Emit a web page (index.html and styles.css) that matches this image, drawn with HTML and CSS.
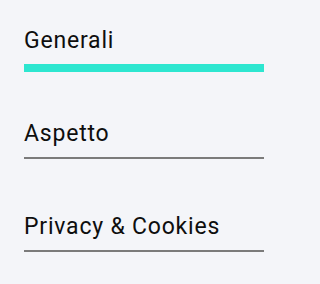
FILE: index.html
```html
<!DOCTYPE html>
<html lang="it">
<head>
<meta charset="utf-8">
<title>Impostazioni</title>
<link rel="stylesheet" href="styles.css">
</head>
<body>
<nav class="tabs">
  <a class="tab tab-active" href="#">Generali</a>
  <a class="tab" href="#">Aspetto</a>
  <a class="tab" href="#">Privacy &amp; Cookies</a>
</nav>
</body>
</html>
```
FILE: styles.css
```css
html, body {
  margin: 0;
  padding: 0;
  background: #f4f5f9;
}
body {
  width: 290px;
  height: 284px;
  overflow: hidden;
}
.tabs {
  display: flex;
  flex-direction: column;
  gap: 55px;
  padding: 28px 26px 0 24px;
  width: 240px;
}
.tab {
  display: block;
  font-family: Roboto, "Liberation Sans", sans-serif;
  font-size: 23px;
  line-height: 26px;
  letter-spacing: 0.8px;
  color: #0e0e0e;
  text-decoration: none;
  padding-bottom: 10px;
  border-bottom: 2px solid #7b7b7b;
}
.tab-active {
  border-bottom: 8px solid #2de6d0;
  margin-bottom: -6px;
}
```
